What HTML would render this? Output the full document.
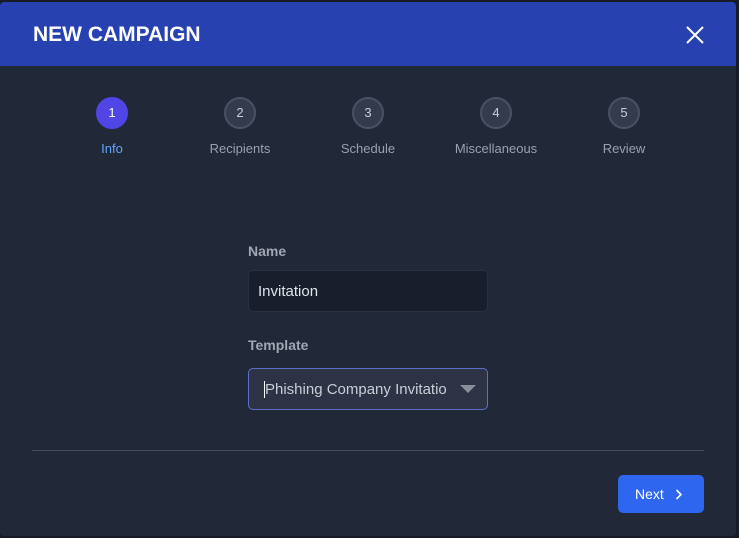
<!DOCTYPE html>
<html><head><style>
html,body{margin:0;padding:0;width:739px;height:538px;background:#161b26;overflow:hidden;font-family:"Liberation Sans",sans-serif;}
.modal{position:absolute;left:0;top:2px;width:736px;height:534px;background:#212837;border-radius:4px;overflow:hidden;}
.hdr{position:absolute;left:0;top:0;width:736px;height:64px;background:#2742b0;}
.title{position:absolute;left:33px;top:21px;color:#fff;font-weight:bold;font-size:21px;}
.step{position:absolute;top:95px;width:120px;margin-left:-60px;text-align:center;}
.c{width:28px;height:28px;border-radius:50%;margin:0 auto;background:#343b4c;border:2px solid #4a5163;color:#c9cdd6;font-size:13px;line-height:28px;}
.c.a{background:#4f46e5;border-color:#4f46e5;color:#fff;}
.l{margin-top:12px;font-size:13px;color:#9aa1ad;}
.l.a{color:#60a5fa;}
.lbl{position:absolute;left:248px;color:#a0a6b2;font-weight:bold;font-size:14px;}
.in{position:absolute;left:248px;width:240px;height:42px;border-radius:5px;box-sizing:border-box;font-size:15px;color:#dfe3ea;line-height:42px;}
</style></head><body>
<div class="modal">
<div class="hdr"><div class="title">NEW CAMPAIGN</div>
<svg style="position:absolute;left:686px;top:24px" width="18" height="18"><path d="M1 1L17 17M17 1L1 17" stroke="#fff" stroke-width="2"/></svg></div>
<div class="step" style="left:112px"><div class="c a">1</div><div class="l a">Info</div></div>
<div class="step" style="left:240px"><div class="c">2</div><div class="l">Recipients</div></div>
<div class="step" style="left:368px"><div class="c">3</div><div class="l">Schedule</div></div>
<div class="step" style="left:496px"><div class="c">4</div><div class="l">Miscellaneous</div></div>
<div class="step" style="left:624px"><div class="c">5</div><div class="l">Review</div></div>
<div class="lbl" style="top:241px">Name</div>
<div class="in" style="top:268px;background:#191e2d;border:1px solid #2a3040;padding-left:9px">Invitation</div>
<div class="lbl" style="top:335px">Template</div>
<div class="in" style="top:366px;background:#2d3345;border:1px solid #5b6fc9;padding-left:16px;color:#c9cdd6"><span style="border-left:1px solid #fff;margin-left:-1px"></span>Phishing Company Invitatio
<svg style="position:absolute;left:211px;top:16px" width="16" height="9"><path d="M0 0H16L8 8Z" fill="#8a8f99"/></svg></div>
<div style="position:absolute;left:32px;top:448px;width:672px;height:1px;background:#464d5c"></div>
<div style="position:absolute;left:618px;top:473px;width:86px;height:38px;background:#2f66ef;border-radius:5px;color:#fff;font-size:14px;line-height:38px">
<span style="position:absolute;left:17px">Next</span>
<svg style="position:absolute;left:57px;top:14px" width="8" height="11"><path d="M1.5 1L6 5.5L1.5 10" stroke="#fff" stroke-width="1.6" fill="none"/></svg></div>
</div>
</body></html>
